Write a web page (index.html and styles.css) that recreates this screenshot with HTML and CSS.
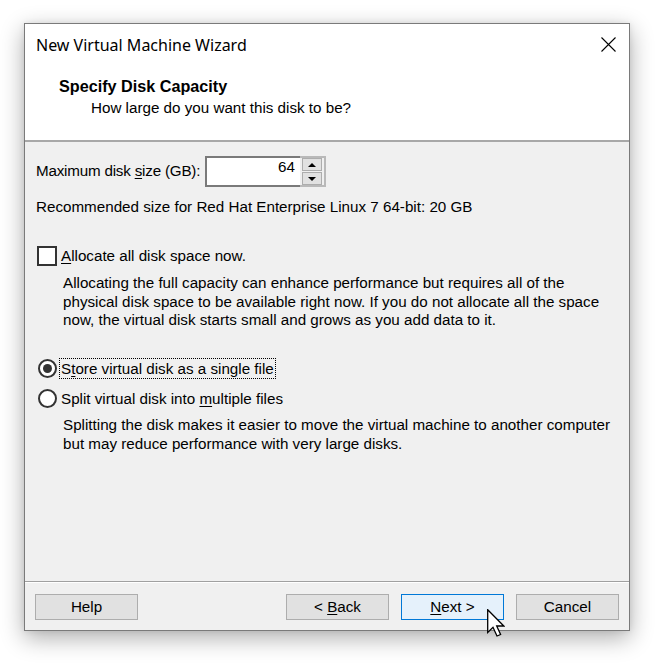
FILE: index.html
```html
<!DOCTYPE html>
<html lang="en">
<head>
<meta charset="utf-8">
<title>New Virtual Machine Wizard</title>
<link rel="stylesheet" href="styles.css">
</head>
<body>
<div class="window">
  <div class="header">
    <div class="titlebar">
      <span class="title">New Virtual Machine Wizard</span>
      <svg class="close" width="15" height="15" viewBox="0 0 15 15"><path d="M0.5 0.5 L14.5 14.5 M14.5 0.5 L0.5 14.5" stroke="#000" stroke-width="1.1" fill="none"/></svg>
    </div>
    <div class="heading">Specify Disk Capacity</div>
    <div class="subheading">How large do you want this disk to be?</div>
  </div>
  <div class="content">
    <div class="size-row">
      <span class="label">Maximum disk <u>s</u>ize (GB):</span>
      <div class="spin">
        <div class="spin-field">64</div>
        <div class="spin-btns">
          <div class="spin-btn"><span class="arrow-up"></span></div>
          <div class="spin-btn"><span class="arrow-down"></span></div>
        </div>
      </div>
    </div>
    <div class="recommend">Recommended size for Red Hat Enterprise Linux 7 64-bit: 20 GB</div>
    <div class="check-row">
      <span class="checkbox"></span>
      <span class="check-label"><u>A</u>llocate all disk space now.</span>
    </div>
    <div class="desc desc-alloc">Allocating the full capacity can enhance performance but requires all of the<br>physical disk space to be available right now. If you do not allocate all the space<br>now, the virtual disk starts small and grows as you add data to it.</div>
    <div class="radio-row radio-first">
      <span class="radio checked"></span>
      <span class="radio-label focused">S<u>t</u>ore virtual disk as a single file</span>
    </div>
    <div class="radio-row radio-second">
      <span class="radio"></span>
      <span class="radio-label">Split virtual disk into <u>m</u>ultiple files</span>
    </div>
    <div class="desc desc-split">Splitting the disk makes it easier to move the virtual machine to another computer<br>but may reduce performance with very large disks.</div>
  </div>
  <div class="footer">
    <div class="btn">Help</div>
    <div class="spacer"></div>
    <div class="btn">&lt; <u>B</u>ack</div>
    <div class="btn btn-default"><u>N</u>ext &gt;</div>
    <div class="btn">Cancel</div>
  </div>
</div>
<svg class="cursor" width="18" height="28" viewBox="0 0 18 28"><path d="M0.7 0.7 L0.7 23.5 L6 18.3 L10 27 L13.6 25.5 L9.7 17 L16.8 17 Z" fill="#fff" stroke="#000" stroke-width="1.3" stroke-linejoin="miter"/></svg>
</body>
</html>
```
FILE: styles.css
```css
html, body {
  margin: 0;
  padding: 0;
  background: #ffffff;
}
body {
  font-family: "Liberation Sans", Arial, sans-serif;
  font-size: 15.2px;
  line-height: 18.33px;
  color: #000;
  position: relative;
  width: 660px;
  height: 663px;
  overflow: hidden;
}
u { text-decoration: underline; text-underline-offset: 2px; }

.window {
  margin: 23px 0 0 24px;
  width: 606px;
  height: 608px;
  box-sizing: border-box;
  border: 1px solid #7a7a7a;
  background: #f0f0f0;
  display: flex;
  flex-direction: column;
  box-shadow: 0 7px 22px rgba(0, 0, 0, 0.32), 0 0 6px rgba(0, 0, 0, 0.08);
}

/* header */
.header {
  height: 116px;
  background: #fff;
  border-bottom: 2px solid #a8a8a8;
  flex: none;
}
.titlebar {
  display: flex;
  align-items: center;
  justify-content: space-between;
  padding: 10px 13px 0 11px;
  height: 22px;
}
.title {
  font-family: "Noto Sans", "Liberation Sans", sans-serif;
  font-size: 16px;
  line-height: 22px;
}
.close { display: block; margin-top: -1px; }
.heading {
  margin-top: 20px;
  padding-left: 34px;
  font-weight: bold;
  font-size: 16.2px;
  line-height: 20px;
}
.subheading {
  margin-top: 3px;
  padding-left: 66px;
  line-height: 18px;
}

/* content */
.content {
  flex: 1;
  padding: 14px 0 0 11px;
}
.size-row {
  display: flex;
  align-items: center;
  height: 31px;
}
.label {
  width: 169px;
  flex: none;
  white-space: nowrap;
  letter-spacing: -0.2px;
}
.spin {
  display: flex;
  height: 31px;
  width: 121px;
}
.spin-field {
  width: 95px;
  box-sizing: border-box;
  background: #fff;
  border: 2px solid #7a7a7a;
  border-right: none;
  text-align: right;
  padding-right: 5px;
}
.spin-btns {
  width: 26px;
  box-sizing: border-box;
  border: 2px solid #b9b9b9;
  border-left: none;
  padding-left: 2px;
  display: flex;
  flex-direction: column;
  gap: 1px;
}
.spin-btn {
  width: 20px;
  height: 13px;
  box-sizing: border-box;
  border: 1px solid #adadad;
  background: #e1e1e1;
  display: flex;
  align-items: center;
  justify-content: center;
}
.arrow-up, .arrow-down {
  width: 0;
  height: 0;
  border-left: 4px solid transparent;
  border-right: 4px solid transparent;
}
.arrow-up { border-bottom: 4px solid #000; }
.arrow-down { border-top: 4px solid #000; }

.recommend { margin-top: 11px; }

.check-row {
  margin-top: 30px;
  display: flex;
  align-items: center;
  height: 20px;
}
.checkbox {
  width: 20px;
  height: 20px;
  box-sizing: border-box;
  border: 2px solid #333;
  background: #fff;
  margin-left: 1px;
  margin-right: 4px;
}
.desc {
  margin-left: 27px;
  white-space: nowrap;
}
.desc-alloc { margin-top: 8px; }

.radio-row {
  display: flex;
  align-items: center;
  height: 21px;
}
.radio-first { margin-top: 29px; }
.radio-second { margin-top: 9px; }
.radio {
  width: 19px;
  height: 19px;
  box-sizing: border-box;
  border: 2px solid #333;
  border-radius: 50%;
  background: #fff;
  margin-left: 2px;
  margin-right: 2px;
  position: relative;
}
.radio.checked::after {
  content: "";
  position: absolute;
  left: 3px;
  top: 3px;
  width: 9px;
  height: 9px;
  border-radius: 50%;
  background: #333;
}
.radio-label {
  line-height: 19px;
  border: 1px dotted transparent;
  padding: 0 1px 0 1px;
}
.radio-label.focused { border-color: #000; }
.desc-split { margin-top: 7px; }

/* footer */
.footer {
  flex: none;
  border-top: 1px solid #a0a0a0;
  box-shadow: inset 0 1px 0 #ffffff;
  display: flex;
  align-items: flex-start;
  gap: 12px;
  padding: 12px 10px 0 10px;
  box-sizing: content-box;
  height: 36px;
}
.spacer { flex: 1; }
.btn {
  width: 103px;
  height: 26px;
  box-sizing: border-box;
  border: 1px solid #adadad;
  background: #e1e1e1;
  text-align: center;
  line-height: 24px;
}
.btn-default {
  border-color: #0078d7;
  background: #e5f1fb;
}

.cursor {
  position: absolute;
  left: 487px;
  top: 609px;
}
```
